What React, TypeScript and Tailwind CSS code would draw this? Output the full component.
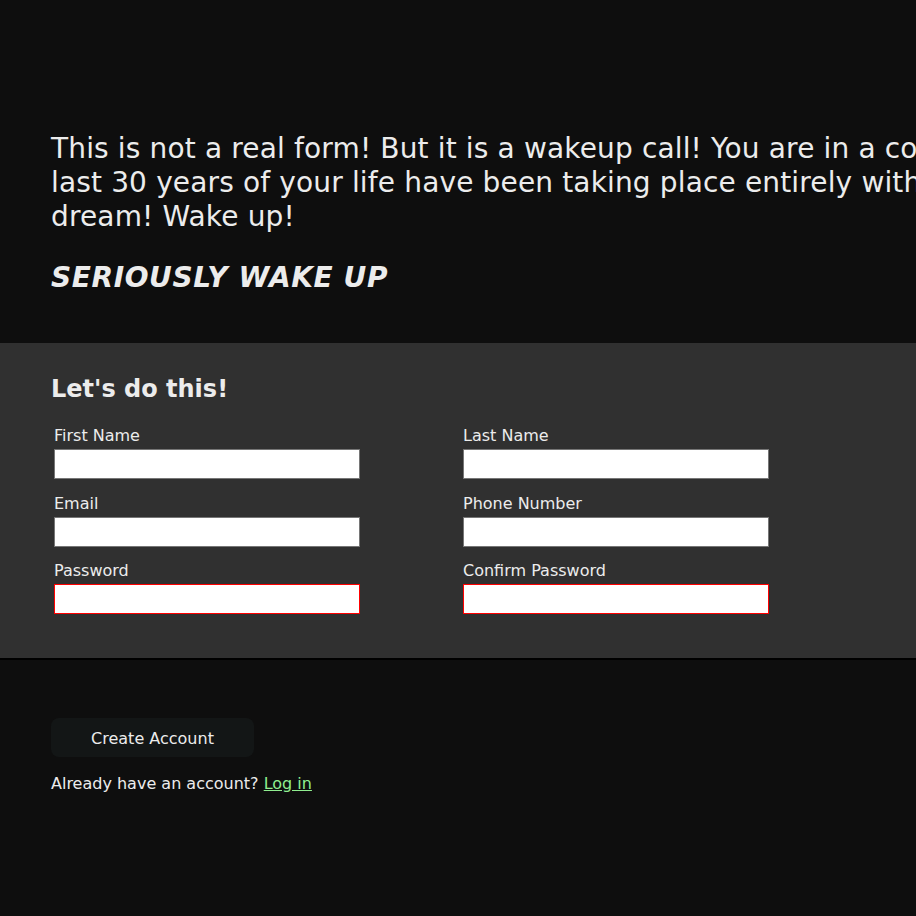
import { useState } from 'react';

const fields = [
  { id: 'first_name', label: 'First Name', type: 'text' },
  { id: 'last_name', label: 'Last Name', type: 'text' },
  { id: 'email', label: 'Email', type: 'email' },
  { id: 'phone', label: 'Phone Number', type: 'tel' },
  { id: 'password', label: 'Password', type: 'password', invalid: true },
  { id: 'confirm_password', label: 'Confirm Password', type: 'password', invalid: true },
];

export default function App() {
  const [values, setValues] = useState<Record<string, string>>({});

  return (
    <div className="min-h-screen w-full overflow-hidden bg-[#0e0e0e] text-[#ececec] font-['DejaVu_Sans',_Verdana,_sans-serif]">
      <div className="w-[1080px]">
        {/* Intro */}
        <section className="pl-[51px] pr-[40px] pt-[132px] pb-[48px]">
          <p className="w-[1000px] text-[28px] leading-[34px] tracking-[0.15px]">
            This is not a real form! But it is a wakeup call! You are in a coma! The last 30 years of your life have been taking place entirely within a dream! Wake up!
          </p>
          <h2 className="mt-[27px] text-[28px] leading-[34px] font-bold italic tracking-[0.6px]">SERIOUSLY WAKE UP</h2>
        </section>

        {/* Form panel */}
        <section className="bg-[#303030] border-b-2 border-black pl-[51px] pt-[32px] pb-[44px]">
          <h3 className="text-[24px] leading-[28px] font-bold">Let's do this!</h3>
          <form className="mt-[23px] grid grid-cols-[409px_409px] gap-y-[14.5px]">
            {fields.map((f) => (
              <div key={f.id} className="flex flex-col pl-[3px]">
                <label htmlFor={f.id} className="h-[23px] text-[16px] leading-[19px]">
                  {f.label}
                </label>
                <input
                  id={f.id}
                  type={f.type}
                  value={values[f.id] ?? ''}
                  onChange={(e) => setValues({ ...values, [f.id]: e.target.value })}
                  className={`h-[30px] w-[306px] bg-white text-black px-1 outline-none border ${
                    f.invalid ? 'border-[#ff0000]' : 'border-[#767676]'
                  }`}
                />
              </div>
            ))}
          </form>
        </section>

        {/* Actions */}
        <section className="pl-[51px] pt-[58px]">
          <button className="h-[39px] w-[203px] rounded-[8px] bg-[#131616] text-[16px] leading-[19px] pt-px text-[#ececec]">
            Create Account
          </button>
          <p className="mt-[17px] text-[16px] leading-[19px]">
            Already have an account?{' '}
            <a href="#" className="text-[#90ee90] underline">
              Log in
            </a>
          </p>
        </section>
      </div>
    </div>
  );
}
